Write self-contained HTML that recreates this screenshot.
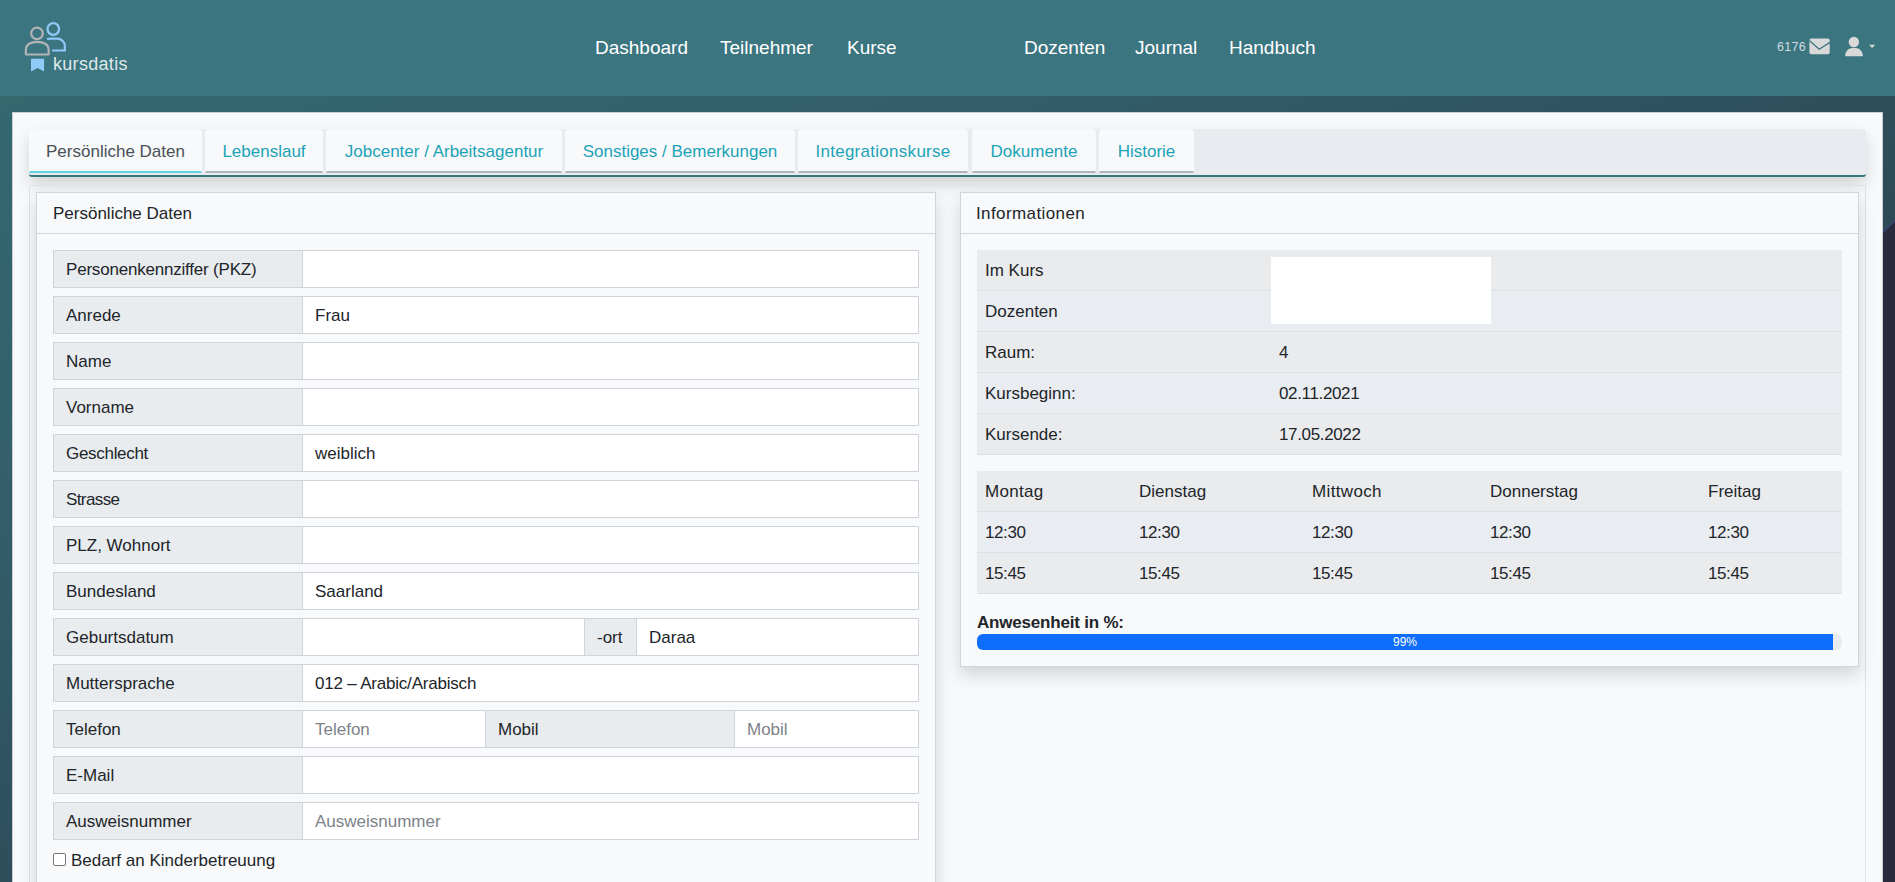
<!DOCTYPE html>
<html><head><meta charset="utf-8">
<style>
*{box-sizing:border-box;margin:0;padding:0}
html,body{width:1895px;height:882px;overflow:hidden;font-family:"Liberation Sans",sans-serif;font-size:17px;line-height:24px;color:#212529}
.abs{position:absolute}
#hdr{position:absolute;left:0;top:0;width:1895px;height:96px;background:#3b7580}
#bg{position:absolute;left:0;top:96px;width:1895px;height:786px;background:linear-gradient(to bottom right,#33686f 0%,#33606c 23%,#2f4e5c 50%,#283446 100%)}
#navyedge{position:absolute;left:0;top:96px;width:1895px;height:786px;background:#3d3f7e;clip-path:polygon(1895px 124.5px,1895px 786px,1176px 786px)}
#navy{position:absolute;left:0;top:96px;width:1895px;height:786px;background:#292b3d;clip-path:polygon(1895px 126px,1895px 786px,1178px 786px)}
.nav{position:absolute;top:33.5px;color:#fff;font-size:19px;line-height:28px;white-space:nowrap}
#main{position:absolute;left:12px;top:112px;width:1871px;height:800px;background:#f8f9fa;border:1px solid #c9cdd0;border-right-color:#c9cdd0}
#tabs{position:absolute;left:29px;top:129px;width:1837px;height:48px;background:#e8ebf0;border-bottom:2px solid #37787f;border-radius:4px 4px 3px 3px;box-shadow:0 8px 16px rgba(0,0,0,.15)}
.tab{position:absolute;top:129px;height:44px;background:#f8f9fa;border-radius:4px 4px 0 0;border:1px solid transparent;border-bottom:2px solid #adb5bd;color:#1ba3b7;white-space:nowrap;padding-top:9.5px;text-align:center}
.tab.act{border-bottom-color:#66d0e1;color:#495057}
#tc{position:absolute;left:29px;top:185px;width:1837px;height:720px;border:1px solid #dfe2e5;background:transparent}
.card{position:absolute;background:#f8f9fa;border:1px solid #d2d4d6;box-shadow:0 8px 16px rgba(0,0,0,.15)}
.ch{position:absolute;left:0;top:0;right:0;height:41px;border-bottom:1px solid #d2d4d6;padding:9px 0 0 16px}
.ig{position:absolute;left:53px;width:866px;height:38px}
.lbl{position:absolute;top:0;height:38px;background:#e9ecef;border:1px solid #ced4da;padding:7px 0 0 12px;white-space:nowrap}
.inp{position:absolute;top:0;height:38px;background:#fff;border:1px solid #ced4da;padding:7px 0 0 12px;white-space:nowrap}
.ph{color:#7d8389}
.t{position:absolute;white-space:nowrap}

.tr{position:absolute;left:977px;width:865px;height:41px;border-bottom:1px solid #dcdfe3}
.td{line-height:24px}
.mob{font-size:17px}
#prog{position:absolute;left:977px;top:634px;width:865px;height:16px;background:#e9ecef;border-radius:6px;overflow:hidden}
#bar{position:absolute;left:0;top:0;width:856px;height:16px;background:#0d6efd;color:#fff;font-size:12px;line-height:16px;text-align:center}
#cb{position:absolute;left:53px;top:853px;width:13px;height:13px;border:1px solid #767676;border-radius:2px;background:#fff}
</style></head><body>
<div id="hdr"></div>
<div id="bg"></div>
<div id="navyedge"></div><div id="navy"></div>
<svg class="abs" style="left:0;top:0" width="140" height="96" viewBox="0 0 140 96">
 <circle cx="37" cy="33.4" r="5.8" fill="none" stroke="#b1b3b5" stroke-width="2.2"/>
 <path d="M25.9,54.5 V49.5 C25.9,44.5 31,41.8 37.25,41.8 C43.5,41.8 48.6,44.5 48.6,49.5 V54.5 Z" fill="none" stroke="#b1b3b5" stroke-width="2.2" stroke-linejoin="round"/>
 <circle cx="53.3" cy="29" r="5.8" fill="none" stroke="#90caf9" stroke-width="2.2"/>
 <path d="M47,39 C48,38.6 49,38.6 51,38.6 H57 C61.5,38.6 64.8,41.8 64.8,46 V50.5 H52.2" fill="none" stroke="#90caf9" stroke-width="2.2"/>
 <path d="M31,58.8 H44.1 V71.4 L37.55,68 L31,71.4 Z" fill="#90caf9"/>
</svg>
<div class="t" style="left:53px;top:53px;font-size:18px;line-height:22px;color:#dfe8ea;letter-spacing:0.3px">kursdatis</div>
<div class="t" style="left:1777px;top:39px;font-size:12.5px;line-height:16px;color:#cfdde0;letter-spacing:0.3px">6176</div>
<svg class="abs" style="left:1800px;top:30px" width="95" height="40" viewBox="1800 30 95 40">
 <rect x="1809.4" y="38.6" width="20.3" height="15.6" rx="2" fill="#d9d9d9"/>
 <path d="M1809.3,40.6 L1819.2,49.3 L1830,42.4" fill="none" stroke="#3b7580" stroke-width="1.3"/>
 <circle cx="1853.9" cy="42" r="5.2" fill="#d9d9d9"/>
 <path d="M1845.1,56.2 C1845.1,51.6 1848.6,48.1 1852.6,48.1 H1855.4 C1859.4,48.1 1862.9,51.6 1862.9,56.2 Z" fill="#d9d9d9"/>
 <path d="M1869,44.7 H1875.2 L1872.1,47.9 Z" fill="#d9d9d9"/>
</svg>


<div class="nav" style="left:595px">Dashboard</div>
<div class="nav" style="left:720px">Teilnehmer</div>
<div class="nav" style="left:847px">Kurse</div>
<div class="nav" style="left:1024px">Dozenten</div>
<div class="nav" style="left:1135px">Journal</div>
<div class="nav" style="left:1229px">Handbuch</div>

<div id="main"></div>
<div id="tabs"></div>
<div class="tab act" style="left:29px;width:173px">Persönliche Daten</div>
<div class="tab" style="left:205px;width:118px">Lebenslauf</div>
<div class="tab" style="left:326px;width:236px">Jobcenter / Arbeitsagentur</div>
<div class="tab" style="left:565px;width:230px">Sonstiges / Bemerkungen</div>
<div class="tab" style="left:798px;width:170px;letter-spacing:0.28px">Integrationskurse</div>
<div class="tab" style="left:972px;width:124px">Dokumente</div>
<div class="tab" style="left:1099px;width:95px">Historie</div>

<div id="tc"></div>

<div class="card" style="left:36px;top:192px;width:900px;height:720px">
  <div class="ch">Persönliche Daten</div>
</div>
<div class="card" style="left:960px;top:192px;width:899px;height:475px">
  <div class="ch" style="padding-left:15px;letter-spacing:0.4px">Informationen</div>
</div>

<div class="lbl" style="left:53px;top:250px;width:250px;letter-spacing:-0.2px">Personenkennziffer (PKZ)</div>
<div class="inp" style="left:302px;top:250px;width:617px"></div>
<div class="lbl" style="left:53px;top:296px;width:250px">Anrede</div>
<div class="inp" style="left:302px;top:296px;width:617px">Frau</div>
<div class="lbl" style="left:53px;top:342px;width:250px">Name</div>
<div class="inp" style="left:302px;top:342px;width:617px"></div>
<div class="lbl" style="left:53px;top:388px;width:250px">Vorname</div>
<div class="inp" style="left:302px;top:388px;width:617px"></div>
<div class="lbl" style="left:53px;top:434px;width:250px;letter-spacing:-0.3px">Geschlecht</div>
<div class="inp" style="left:302px;top:434px;width:617px">weiblich</div>
<div class="lbl" style="left:53px;top:480px;width:250px;letter-spacing:-0.6px">Strasse</div>
<div class="inp" style="left:302px;top:480px;width:617px"></div>
<div class="lbl" style="left:53px;top:526px;width:250px">PLZ, Wohnort</div>
<div class="inp" style="left:302px;top:526px;width:617px"></div>
<div class="lbl" style="left:53px;top:572px;width:250px">Bundesland</div>
<div class="inp" style="left:302px;top:572px;width:617px">Saarland</div>
<div class="lbl" style="left:53px;top:618px;width:250px">Geburtsdatum</div>
<div class="inp" style="left:302px;top:618px;width:283px"></div>
<div class="lbl" style="left:584px;top:618px;width:53px">-ort</div>
<div class="inp" style="left:636px;top:618px;width:283px">Daraa</div>
<div class="lbl" style="left:53px;top:664px;width:250px">Muttersprache</div>
<div class="inp" style="left:302px;top:664px;width:617px;letter-spacing:-0.2px">012 – Arabic/Arabisch</div>
<div class="lbl" style="left:53px;top:710px;width:250px">Telefon</div>
<div class="inp ph" style="left:302px;top:710px;width:184px">Telefon</div>
<div class="lbl mob" style="left:485px;top:710px;width:250px">Mobil</div>
<div class="inp ph" style="left:734px;top:710px;width:185px">Mobil</div>
<div class="lbl" style="left:53px;top:756px;width:250px">E-Mail</div>
<div class="inp" style="left:302px;top:756px;width:617px"></div>
<div class="lbl" style="left:53px;top:802px;width:250px">Ausweisnummer</div>
<div class="inp ph" style="left:302px;top:802px;width:617px">Ausweisnummer</div>
<div class="tr" style="top:250px;background:#eaebed"></div>
<div class="t td" style="left:985px;top:259px">Im Kurs</div>
<div class="tr" style="top:291px;background:#e9ecf0"></div>
<div class="t td" style="left:985px;top:300px">Dozenten</div>
<div class="tr" style="top:332px;background:#eaebed"></div>
<div class="t td" style="left:985px;top:341px">Raum:</div>
<div class="t td" style="left:1279px;top:341px">4</div>
<div class="tr" style="top:373px;background:#e9ecf0"></div>
<div class="t td" style="left:985px;top:382px">Kursbeginn:</div>
<div class="t td" style="left:1279px;top:382px;letter-spacing:-0.35px">02.11.2021</div>
<div class="tr" style="top:414px;background:#eaebed"></div>
<div class="t td" style="left:985px;top:423px">Kursende:</div>
<div class="t td" style="left:1279px;top:423px;letter-spacing:-0.35px">17.05.2022</div>
<div class="abs" style="left:1271px;top:257px;width:220px;height:67px;background:#fff"></div>
<div class="tr" style="top:471px;background:#eaebed"></div>
<div class="t td" style="left:985px;top:480px;letter-spacing:0.3px">Montag</div>
<div class="t td" style="left:1139px;top:480px">Dienstag</div>
<div class="t td" style="left:1312px;top:480px;letter-spacing:0.35px">Mittwoch</div>
<div class="t td" style="left:1490px;top:480px">Donnerstag</div>
<div class="t td" style="left:1708px;top:480px">Freitag</div>
<div class="tr" style="top:512px;background:#e9ecf0"></div>
<div class="t td" style="left:985px;top:521px;letter-spacing:-0.4px">12:30</div>
<div class="t td" style="left:1139px;top:521px;letter-spacing:-0.4px">12:30</div>
<div class="t td" style="left:1312px;top:521px;letter-spacing:-0.4px">12:30</div>
<div class="t td" style="left:1490px;top:521px;letter-spacing:-0.4px">12:30</div>
<div class="t td" style="left:1708px;top:521px;letter-spacing:-0.4px">12:30</div>
<div class="tr" style="top:553px;background:#eaebed"></div>
<div class="t td" style="left:985px;top:562px;letter-spacing:-0.4px">15:45</div>
<div class="t td" style="left:1139px;top:562px;letter-spacing:-0.4px">15:45</div>
<div class="t td" style="left:1312px;top:562px;letter-spacing:-0.4px">15:45</div>
<div class="t td" style="left:1490px;top:562px;letter-spacing:-0.4px">15:45</div>
<div class="t td" style="left:1708px;top:562px;letter-spacing:-0.4px">15:45</div>
<div class="t" style="left:977px;top:611px;font-weight:bold;letter-spacing:-0.2px">Anwesenheit in %:</div>
<div id="prog"><div id="bar">99%</div></div>
<div id="cb"></div>
<div class="t" style="left:71px;top:849px">Bedarf an Kinderbetreuung</div>

</body></html>
